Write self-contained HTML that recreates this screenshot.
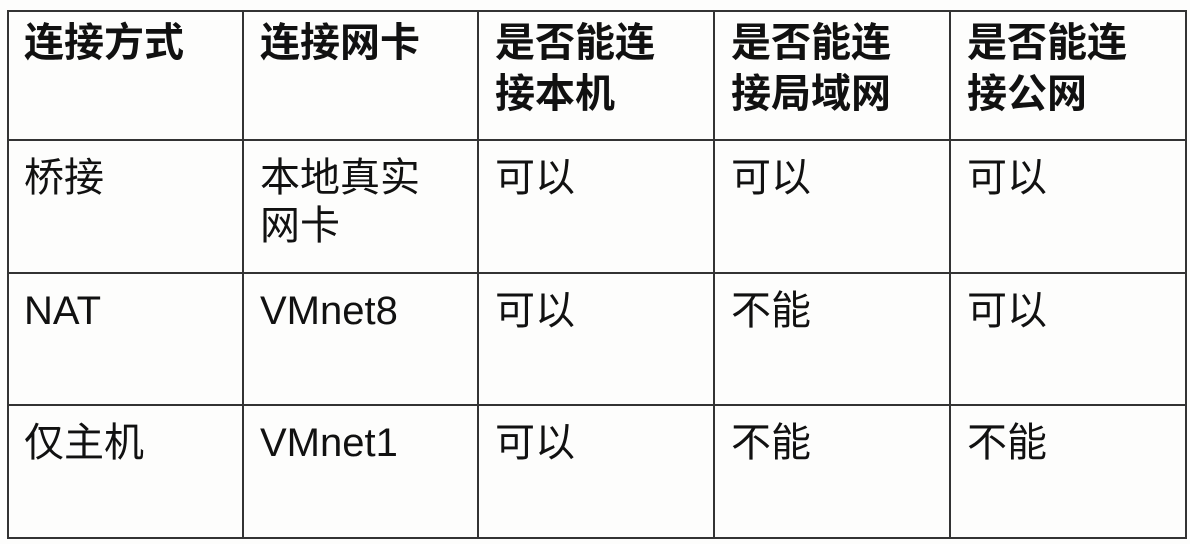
<!DOCTYPE html>
<html><head><meta charset="utf-8"><style>
body{margin:0;width:1190px;height:544px;background:#fdfdfc;position:relative;overflow:hidden;font-family:"Liberation Sans","Noto Sans CJK SC",sans-serif;color:#111}
.h,.v{position:absolute;background:#333}
.h{height:2px;left:7px;width:1180px}
.v{width:2px;top:10px;height:529px}
.t{position:absolute;font-size:40px;line-height:48px;white-space:nowrap}
.b{font-weight:bold;line-height:51px}
</style></head><body>
<div class="h" style="top:10px"></div><div class="h" style="top:139px"></div><div class="h" style="top:272px"></div><div class="h" style="top:404px"></div><div class="h" style="top:537px"></div>
<div class="v" style="left:7px"></div><div class="v" style="left:242px"></div><div class="v" style="left:477px"></div><div class="v" style="left:713px"></div><div class="v" style="left:949px"></div><div class="v" style="left:1185px"></div>
<div class="t b" style="left:24px;top:18px">连接方式</div>
<div class="t b" style="left:260px;top:18px">连接网卡</div>
<div class="t b" style="left:495px;top:18px">是否能连<br>接本机</div>
<div class="t b" style="left:731px;top:18px">是否能连<br>接局域网</div>
<div class="t b" style="left:967px;top:18px">是否能连<br>接公网</div>
<div class="t" style="left:24px;top:154px">桥接</div>
<div class="t" style="left:260px;top:154px">本地真实<br>网卡</div>
<div class="t" style="left:495px;top:154px">可以</div>
<div class="t" style="left:731px;top:154px">可以</div>
<div class="t" style="left:967px;top:154px">可以</div>
<div class="t" style="left:24px;top:287px">NAT</div>
<div class="t" style="left:260px;top:287px">VMnet8</div>
<div class="t" style="left:495px;top:287px">可以</div>
<div class="t" style="left:731px;top:287px">不能</div>
<div class="t" style="left:967px;top:287px">可以</div>
<div class="t" style="left:24px;top:419px">仅主机</div>
<div class="t" style="left:260px;top:419px">VMnet1</div>
<div class="t" style="left:495px;top:419px">可以</div>
<div class="t" style="left:731px;top:419px">不能</div>
<div class="t" style="left:967px;top:419px">不能</div>
</body></html>
